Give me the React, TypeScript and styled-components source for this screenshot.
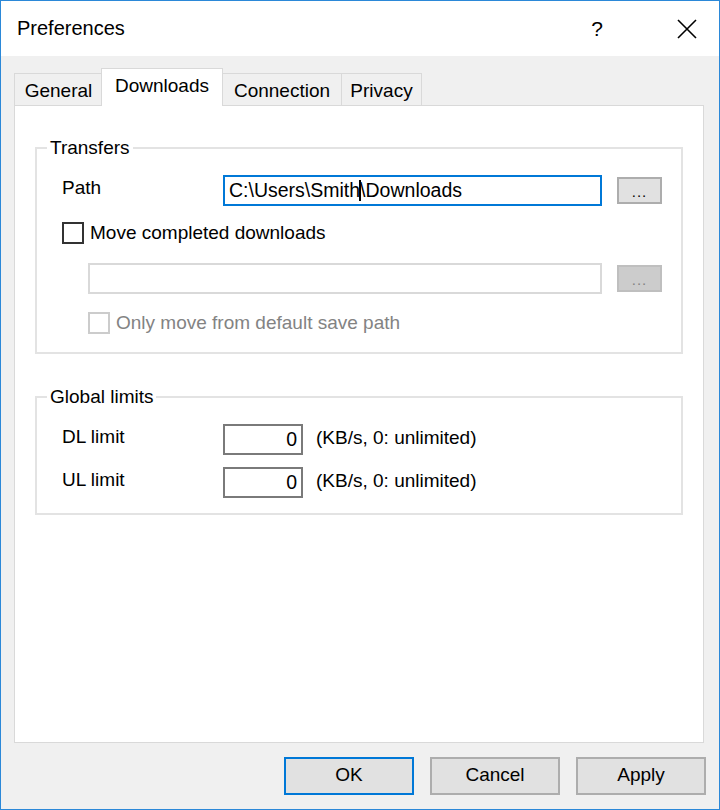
import React from 'react';
import styled, { createGlobalStyle, css } from 'styled-components';

const GlobalStyle = createGlobalStyle`
  html, body {
    margin: 0;
    padding: 0;
    background: #ffffff;
  }
  body {
    font-family: 'Liberation Sans', Arial, sans-serif;
    font-size: 19px;
    color: #000;
  }
  * {
    box-sizing: border-box;
  }
`;

const Window = styled.div`
  width: 720px;
  height: 810px;
  border: 1px solid #2b88d8;
  display: flex;
  flex-direction: column;
  background: #f0f0f0;
`;

const TitleBar = styled.div`
  height: 55px;
  background: #ffffff;
  display: flex;
  align-items: center;
  padding: 0 22px 0 16px;
`;

const Title = styled.div`
  font-size: 20px;
  flex: 1;
`;

const HelpGlyph = styled.span`
  font-size: 21px;
  margin-right: 74px;
`;

const Body = styled.div`
  flex: 1;
  display: flex;
  flex-direction: column;
  padding: 12px 15px 14px 13px;
`;

const TabStrip = styled.div`
  display: flex;
  align-items: flex-end;
  height: 37px;
`;

const Tab = styled.div<{ $active?: boolean; $w: number }>`
  width: ${(p) => p.$w}px;
  height: 32px;
  border: 1px solid #d9d9d9;
  border-bottom: none;
  background: #f0f0f0;
  display: flex;
  align-items: center;
  justify-content: center;
  padding-top: 2px;
  margin-right: -1px;
  ${(p) =>
    p.$active &&
    css`
      height: 38px;
      background: #ffffff;
      margin: 0 -1px -1px -1px;
      padding-top: 0;
      padding-bottom: 3px;
      position: relative;
      z-index: 1;
    `}
`;

const Panel = styled.div`
  flex: 1;
  background: #ffffff;
  border: 1px solid #d9d9d9;
  padding: 31px 20px 0 20px;
`;

const Group = styled.fieldset<{ $gap?: number; $bottom?: number }>`
  margin: ${(p) => p.$gap ?? 0}px 0 0 0;
  border: 2px solid #e3e3e3;
  padding: 16px 19px ${(p) => p.$bottom ?? 18}px 25px;
  display: flex;
  flex-direction: column;
`;

const Legend = styled.legend`
  padding: 0 3px;
  margin-left: -15px;
  line-height: 22px;
`;

const Row = styled.div<{ $top?: number; $indent?: number }>`
  display: flex;
  align-items: center;
  margin-top: ${(p) => p.$top ?? 0}px;
  margin-left: ${(p) => p.$indent ?? 0}px;
`;

const FieldLabel = styled.div`
  width: 161px;
  margin-bottom: 6px;
`;

const TextBox = styled.div<{ $focused?: boolean; $disabled?: boolean }>`
  flex: 1;
  height: 31px;
  border: 2px solid ${(p) => (p.$focused ? '#0078d7' : p.$disabled ? '#d9d9d9' : '#7a7a7a')};
  background: #ffffff;
  display: flex;
  align-items: center;
  padding: 0 4px 1px 4px;
  white-space: pre;
  font-size: 19.5px;
`;

const Caret = styled.span`
  display: inline-block;
  width: 2px;
  height: 21px;
  background: #000;
  margin: 0 -1px;
`;

const NumberBox = styled(TextBox)`
  flex: 0 0 80px;
  justify-content: flex-end;
  padding-right: 4px;
`;

const Unit = styled.span`
  margin-left: 13px;
  margin-bottom: 4px;
`;

const BrowseButton = styled.div<{ $disabled?: boolean }>`
  width: 45px;
  height: 27px;
  margin-left: 15px;
  background: ${(p) => (p.$disabled ? '#cccccc' : '#e1e1e1')};
  border: 2px solid ${(p) => (p.$disabled ? '#bfbfbf' : '#adadad')};
  color: ${(p) => (p.$disabled ? '#838383' : '#000')};
  display: flex;
  align-items: flex-end;
  justify-content: center;
  font-size: 15px;
  line-height: 15px;
  letter-spacing: 1px;
  padding-bottom: 3px;
`;

const Check = styled.label<{ $disabled?: boolean }>`
  display: flex;
  align-items: center;
  gap: 6px;
  height: 22px;
  color: ${(p) => (p.$disabled ? '#838383' : '#000')};
`;

const Box = styled.span<{ $disabled?: boolean }>`
  width: 22px;
  height: 22px;
  border: 2px solid ${(p) => (p.$disabled ? '#cccccc' : '#333333')};
  background: #ffffff;
  flex: none;
`;

const CheckText = styled.span``;

const ButtonRow = styled.div`
  display: flex;
  justify-content: flex-end;
  gap: 16px;
  margin: 14px -2px 0 0;
`;

const DialogButton = styled.div<{ $default?: boolean }>`
  width: 130px;
  height: 38px;
  background: #e1e1e1;
  border: ${(p) => (p.$default ? '2px solid #0078d7' : '2px solid #adadad')};
  display: flex;
  align-items: center;
  justify-content: center;
  padding-bottom: 2px;
`;

const CloseIcon = () => (
  <svg width="20" height="20" viewBox="0 0 20 20" fill="none">
    <path d="M1 1L19 19M19 1L1 19" stroke="#000" strokeWidth="1.6" />
  </svg>
);

export default function App() {
  return (
    <>
      <GlobalStyle />
      <Window>
        <TitleBar>
          <Title>Preferences</Title>
          <HelpGlyph>?</HelpGlyph>
          <CloseIcon />
        </TitleBar>
        <Body>
          <TabStrip>
            <Tab $w={89}>General</Tab>
            <Tab $w={122} $active>
              Downloads
            </Tab>
            <Tab $w={120}>Connection</Tab>
            <Tab $w={81}>Privacy</Tab>
          </TabStrip>
          <Panel>
            <Group>
              <Legend>Transfers</Legend>
              <Row>
                <FieldLabel>Path</FieldLabel>
                <TextBox $focused>
                  C:\Users\Smith<Caret />\Downloads
                </TextBox>
                <BrowseButton>...</BrowseButton>
              </Row>
              <Row $top={16}>
                <Check>
                  <Box />
                  <CheckText>Move completed downloads</CheckText>
                </Check>
              </Row>
              <Row $top={19} $indent={26}>
                <TextBox $disabled />
                <BrowseButton $disabled>...</BrowseButton>
              </Row>
              <Row $top={18} $indent={26}>
                <Check $disabled>
                  <Box $disabled />
                  <CheckText>Only move from default save path</CheckText>
                </Check>
              </Row>
            </Group>
            <Group $gap={32} $bottom={15}>
              <Legend>Global limits</Legend>
              <Row>
                <FieldLabel>DL limit</FieldLabel>
                <NumberBox>0</NumberBox>
                <Unit>(KB/s, 0: unlimited)</Unit>
              </Row>
              <Row $top={12}>
                <FieldLabel>UL limit</FieldLabel>
                <NumberBox>0</NumberBox>
                <Unit>(KB/s, 0: unlimited)</Unit>
              </Row>
            </Group>
          </Panel>
          <ButtonRow>
            <DialogButton $default>OK</DialogButton>
            <DialogButton>Cancel</DialogButton>
            <DialogButton>Apply</DialogButton>
          </ButtonRow>
        </Body>
      </Window>
    </>
  );
}
